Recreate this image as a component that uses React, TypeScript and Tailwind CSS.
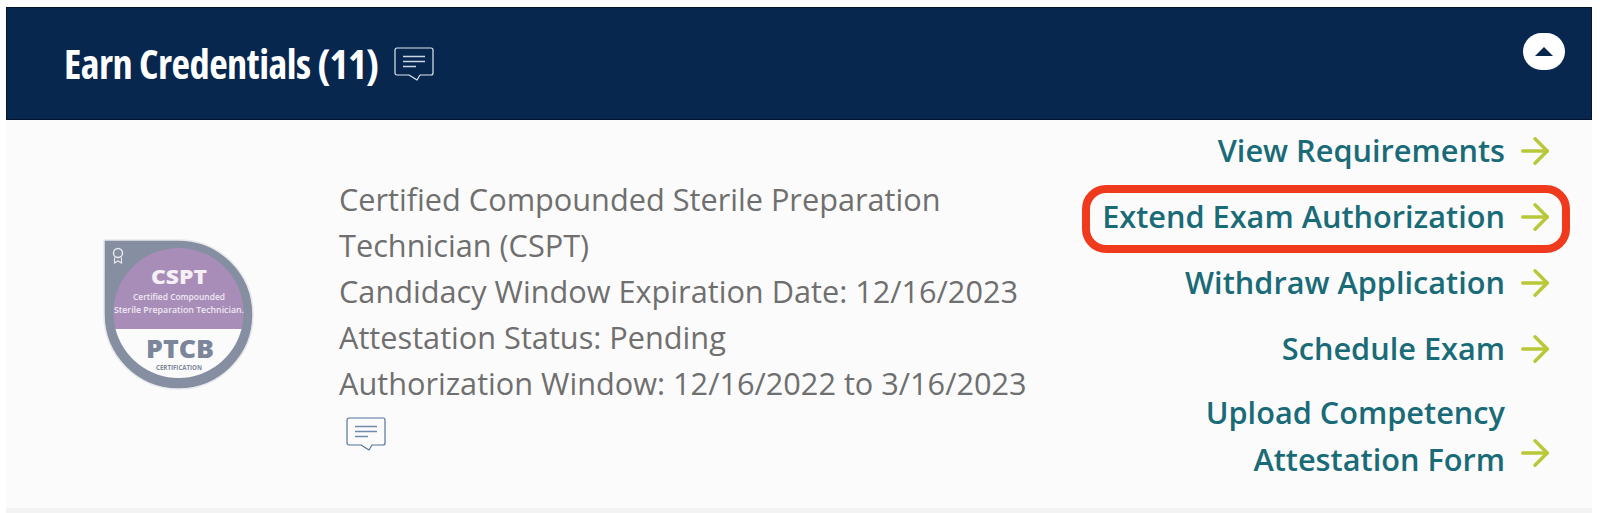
import { ArrowRight } from 'lucide-react'

const FONT = "font-['Open_Sans',sans-serif]"

function NoteIcon({ stroke, lines }: { stroke: string; lines: string }) {
    return (
        <svg width="40" height="35" viewBox="0 0 40 35" fill="none">
            <path
                d="M3 1h34a2 2 0 0 1 2 2v23a2 2 0 0 1-2 2H26l-3 5-8-5H3a2 2 0 0 1-2-2V3a2 2 0 0 1 2-2z"
                stroke={stroke}
                strokeWidth="1.2"
                strokeLinejoin="round"
            />
            <path d="M9 9.5h22M9 14.5h22M9 19.5h13" stroke={lines} strokeWidth="1.4" />
        </svg>
    )
}

function Badge() {
    return (
        <svg width="151" height="151" viewBox="0 0 151 151">
            <path d="M1 1h74a74.5 74.5 0 1 1-74 74z" fill="#868fa1" stroke="#e6e7ea" strokeWidth="1.5" />
            <circle cx="15" cy="14" r="4.5" fill="none" stroke="#e9eaee" strokeWidth="1.4" />
            <path d="M11.5 18.5v5.5l3.5-2 3.5 2v-5.5" fill="none" stroke="#e9eaee" strokeWidth="1.1" />
            <path d="M12.5 90a65 65 0 1 1 126 0z" fill="#a98db9" />
            <path d="M12.5 90h126a65 65 0 0 1-126 0z" fill="#fbfbfc" />
            <text x="76" y="45" textAnchor="middle" fontFamily="Open Sans" fontWeight="800" fontSize="20" fill="#f4f0f6" textLength="56" lengthAdjust="spacingAndGlyphs">CSPT</text>
            <text x="76" y="61" textAnchor="middle" fontFamily="Open Sans" fontWeight="600" fontSize="9" fill="#efe9f3" textLength="92" lengthAdjust="spacingAndGlyphs">Certified Compounded</text>
            <text x="76" y="74" textAnchor="middle" fontFamily="Open Sans" fontWeight="600" fontSize="9" fill="#efe9f3" textLength="130" lengthAdjust="spacingAndGlyphs">Sterile Preparation Technician.</text>
            <text x="77" y="119" textAnchor="middle" fontFamily="Open Sans" fontWeight="800" fontSize="25" fill="#7c869a" textLength="68" lengthAdjust="spacingAndGlyphs">PTCB</text>
            <text x="76" y="131" textAnchor="middle" fontFamily="Open Sans" fontWeight="700" fontSize="7" fill="#7c869a" textLength="46" lengthAdjust="spacingAndGlyphs">CERTIFICATION</text>
        </svg>
    )
}

function ActionLink({ lines, highlight }: { lines: string[]; highlight?: boolean }) {
    const twoLines = lines.length > 1
    return (
        <div className={`flex justify-end ${twoLines ? '-mt-[2px]' : ''}`}>
            <div className="relative flex items-end gap-[9px]">
                {highlight && (
                    <div className="absolute left-[-20px] right-[-23px] top-[-8px] bottom-[-14px] rounded-[24px] border-[8px] border-[#f03a1e]" />
                )}
                <a className={`text-right text-[30.7px] font-semibold text-[#1a6b78] ${twoLines ? 'leading-[47px]' : 'leading-[46px]'}`}>
                    {lines.map(line => (
                        <div key={line}>{line}</div>
                    ))}
                </a>
                <ArrowRight
                    className={`mr-[-9px] h-[42px] w-[42px] text-[#b9c838] ${twoLines ? 'mb-[9px]' : 'mb-[1px]'}`}
                    strokeWidth={2}
                />
            </div>
        </div>
    )
}

export default function App() {
    return (
        <div className={`h-[513px] w-[1600px] overflow-hidden bg-white pl-[6px] pr-[8px] pt-[7px] ${FONT}`}>
            <div className="flex h-[113px] items-start justify-between border border-[#04142f] bg-[#07274f] pl-[57px] pr-[26px]">
                <div className="mt-[31px] flex items-center gap-[16px]">
                    <h2 className="text-[40.4px] leading-[50px] font-bold tracking-[-0.5px] text-white [font-stretch:75%]">Earn Credentials (11)</h2>
                    <NoteIcon stroke="#dfe8f0" lines="#c9d5e2" />
                </div>
                <button className="mt-[25px] flex h-[37px] w-[42px] items-center justify-center rounded-full bg-white">
                    <span className="h-0 w-0 border-x-[9px] border-b-[9px] border-x-transparent border-b-[#07274f]" />
                </button>
            </div>

            <div className="flex h-[388px] bg-[#fbfbfb]">
                <div className="flex w-[333px] shrink-0 pl-[97px] pt-[119px]">
                    <Badge />
                </div>
                <div className="w-[730px] shrink-0 pt-[56px] text-[30.7px] leading-[46px] text-[#6f6f6f]">
                    <div>Certified Compounded Sterile Preparation</div>
                    <div>Technician (CSPT)</div>
                    <div>Candidacy Window Expiration Date: 12/16/2023</div>
                    <div>Attestation Status: Pending</div>
                    <div>Authorization Window: 12/16/2022 to 3/16/2023</div>
                    <div className="mt-[11px] ml-[7px]">
                        <NoteIcon stroke="#55749b" lines="#6f8aad" />
                    </div>
                </div>
                <div className="flex flex-1 flex-col gap-[20px] pr-[45px] pt-[7px]">
                    <ActionLink lines={['View Requirements']} />
                    <ActionLink lines={['Extend Exam Authorization']} highlight />
                    <ActionLink lines={['Withdraw Application']} />
                    <ActionLink lines={['Schedule Exam']} />
                    <ActionLink lines={['Upload Competency', 'Attestation Form']} />
                </div>
            </div>
            <div className="h-[5px] bg-[#f3f3f3]" />
        </div>
    )
}
